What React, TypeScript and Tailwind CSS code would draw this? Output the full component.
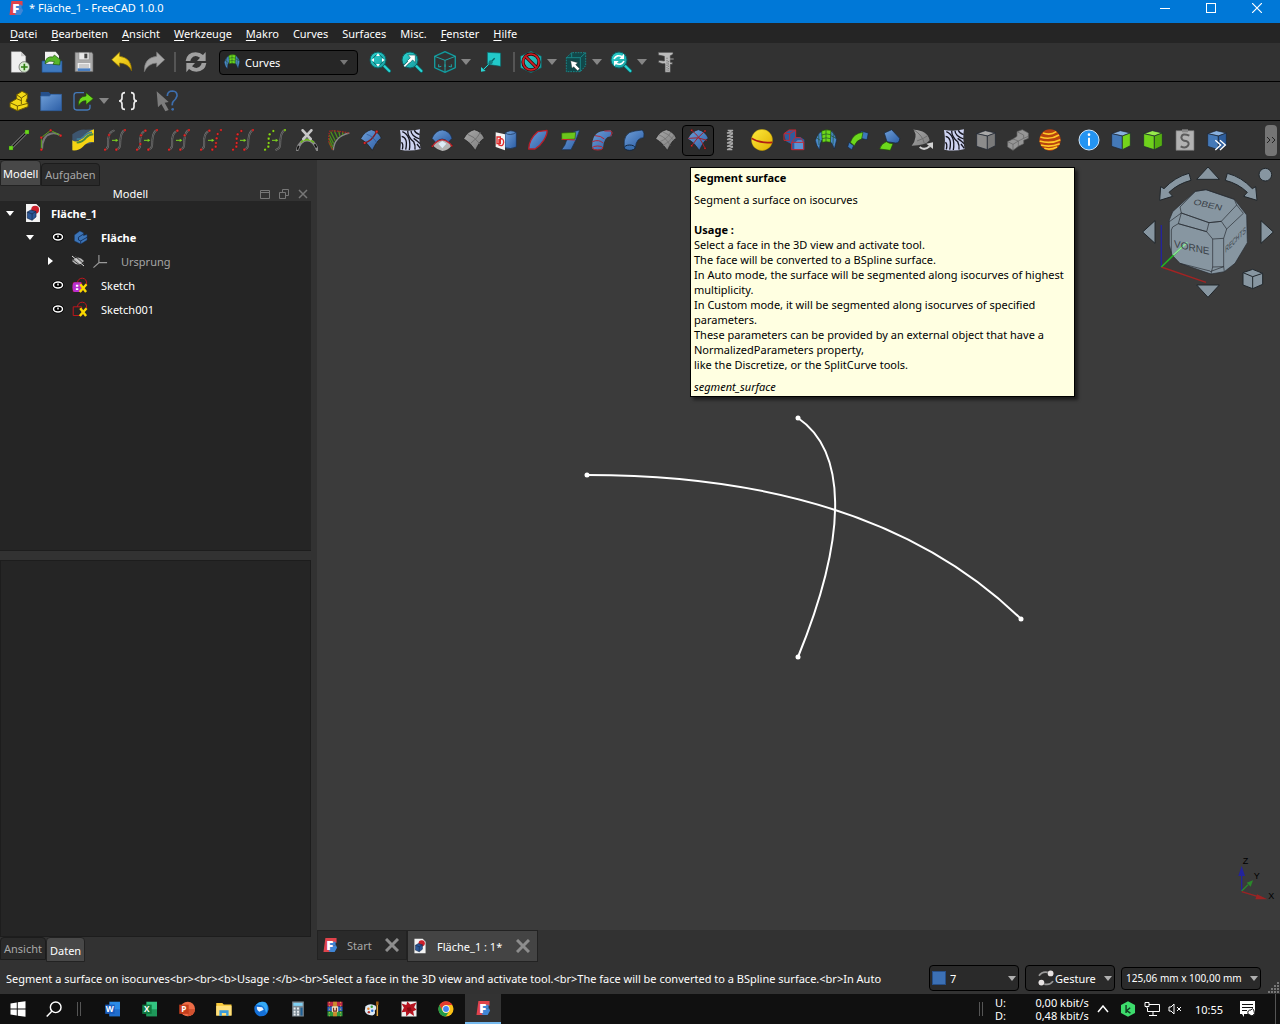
import type { ReactNode } from 'react';

/* ---------- shared drawing helpers ---------- */

function Icon({ children, size = 'size-[22px]' }: { children: ReactNode; size?: string }) {
  return (
    <svg viewBox="0 0 66 66" className={`${size} shrink-0`} fill="none" aria-hidden="true">
      {children}
    </svg>
  );
}

function Gradients() {
  return (
    <svg className="absolute size-0" aria-hidden="true">
      <defs>
        <linearGradient id="blue" x1="0" y1="0" x2="1" y2="1">
          <stop offset="0" stopColor="#6f9fd8" />
          <stop offset="1" stopColor="#2c5ea6" />
        </linearGradient>
        <linearGradient id="gray" x1="0" y1="0" x2="1" y2="1">
          <stop offset="0" stopColor="#a8a8a8" />
          <stop offset="1" stopColor="#7c7c7c" />
        </linearGradient>
        <linearGradient id="yellow" x1="0" y1="0" x2="1" y2="1">
          <stop offset="0" stopColor="#fdea3c" />
          <stop offset="1" stopColor="#e0b000" />
        </linearGradient>
        <linearGradient id="teal" x1="0" y1="0" x2="1" y2="1">
          <stop offset="0" stopColor="#2fd6d2" />
          <stop offset="1" stopColor="#169a9d" />
        </linearGradient>
      </defs>
    </svg>
  );
}

type Pt = [number, number];

function Dots({ pts, color = '#e02c2c', r = 4 }: { pts: Pt[]; color?: string; r?: number }) {
  return (
    <>
      {pts.map(([x, y]) => (
        <circle key={`${x}-${y}`} cx={x} cy={y} r={r} fill={color} stroke="#3a0a0a" strokeWidth="1" />
      ))}
    </>
  );
}

const LEFT: Pt[] = [[3, 62], [13, 53], [14, 42], [14, 29], [17, 16], [28, 6]];
const RIGHT: Pt[] = [[37, 62], [47, 53], [48, 42], [50, 28], [53, 15], [63, 3]];

function CurvePair({ dots, color, left = true, right = true }: { dots: Pt[]; color?: string; left?: boolean; right?: boolean }) {
  return (
    <Icon>
      {left && (
        <g strokeLinecap="round">
          <path d="M3 62C18 58 10 40 13 28Q15 10 29 5" stroke="#777" strokeWidth="6" />
          <path d="M3 62C18 58 10 40 13 28Q15 10 29 5" stroke="#2c2c2c" strokeWidth="2" />
        </g>
      )}
      {right && (
        <g strokeLinecap="round">
          <path d="M37 62C54 58 46 40 50 27Q52 8 63 3" stroke="#777" strokeWidth="6" />
          <path d="M37 62C54 58 46 40 50 27Q52 8 63 3" stroke="#2c2c2c" strokeWidth="2" />
        </g>
      )}
      <path d="M24 34H36" stroke="#7ed321" strokeWidth="3" />
      <path d="M35 29L43 34L35 39Z" fill="#7ed321" />
      <Dots pts={dots} color={color} />
    </Icon>
  );
}

function Magnifier({ children }: { children: ReactNode }) {
  return (
    <Icon>
      <path d="M43 42L61 60" stroke="#0a5f62" strokeWidth="11" strokeLinecap="round" />
      <path d="M43 42L61 60" stroke="#2ad4d2" strokeWidth="7" strokeLinecap="round" />
      <circle cx="27" cy="27" r="24" fill="url(#teal)" stroke="#0a5f62" strokeWidth="3" />
      {children}
    </Icon>
  );
}

function Zebra() {
  return (
    <Icon>
      <path d="M3 3Q33 8 63 1Q58 30 65 60Q34 68 4 62Q8 30 3 3Z" fill="#cdd2f0" />
      <g stroke="#15151f" strokeWidth="4">
        <path d="M8 22Q28 26 20 62" />
        <path d="M10 8Q38 20 31 63" />
        <path d="M26 5Q26 24 44 38Q50 50 48 62" />
        <path d="M36 5Q36 20 62 30" />
        <path d="M46 4Q50 14 62 17" />
        <path d="M44 28Q56 36 63 44" />
        <path d="M54 45L64 58" />
        <path d="M7 40Q14 44 10 61" />
      </g>
    </Icon>
  );
}

function Fan({ fill, children }: { fill: string; children?: ReactNode }) {
  return (
    <Icon>
      <path d="M2 29Q14 7 34 2Q56 8 64 28Q52 32 37 64Q22 40 2 29Z" fill={fill} stroke="#222" strokeWidth="2" />
      {children}
    </Icon>
  );
}

function Box({ left, right, top }: { left: string; right: string; top: string }) {
  return (
    <g stroke="#1c2430" strokeWidth="2" strokeLinejoin="round">
      <path d="M5 14L31 5L61 12L37 21Z" fill={top} />
      <path d="M5 14L37 21V62L5 52Z" fill={left} />
      <path d="M37 21L61 12V50L37 62Z" fill={right} />
    </g>
  );
}

function FreeCadLogo({ size }: { size?: string }) {
  return (
    <Icon size={size}>
      <path d="M14 4H60V24H44V62H6Z" fill="#e0434b" />
      <path d="M34 34H58L62 44L52 62H34Z" fill="#3f86d6" />
      <path d="M30 20H56V34H44V60H28Z" fill="#3f86d6" />
      <text x="18" y="54" fontSize="54" fontWeight="800" fill="#fff" fontFamily="Open Sans, sans-serif">F</text>
    </Icon>
  );
}

function DocIcon({ size }: { size?: string }) {
  return (
    <Icon size={size}>
      <path d="M10 3H44L56 15V63H10Z" fill="#f4f4f4" />
      <circle cx="40" cy="22" r="13" fill="#cc1f2b" />
      <path d="M14 30L26 23L43 28V46L30 57L14 50Z" fill="#2b5797" stroke="#12233f" strokeWidth="2" />
      <path d="M14 30L30 36L43 28M30 36V57" stroke="#12233f" strokeWidth="2" />
    </Icon>
  );
}

function CurvesIcon({ size }: { size?: string }) {
  return (
    <Icon size={size}>
      <path d="M1 34Q8 12 22 6L24 30Q14 38 14 62Q4 52 1 34Z" fill="#4a88c8" stroke="#14273f" strokeWidth="2" />
      <path d="M46 4Q60 12 65 32L58 60Q54 44 44 36Z" fill="#4a88c8" stroke="#14273f" strokeWidth="2" />
      <path d="M20 6Q32 0 48 4L46 40Q34 36 22 40Z" fill="#6cd81c" stroke="#1f4d08" strokeWidth="2" />
      <path d="M33 3V38M20 18Q34 12 47 17M21 29Q34 24 46 29M4 26L16 34M48 20L63 28M11 16L12 48M55 12L54 46" stroke="#1f4d28" strokeWidth="2" />
    </Icon>
  );
}

/* ---------- toolbar pieces ---------- */

function ToolButton({ label, active, children }: { label: string; active?: boolean; children: ReactNode }) {
  return (
    <button
      aria-label={label}
      className={`flex h-[31px] w-8 shrink-0 items-center justify-center rounded-sm ${active ? 'border border-black bg-[#2b2b2b]' : ''}`}
    >
      {children}
    </button>
  );
}

function DropArrow({ label }: { label: string }) {
  return (
    <button aria-label={label} className="flex h-8 w-[13px] shrink-0 items-center">
      <svg viewBox="0 0 10 6" className="h-1.5 w-2.5" aria-hidden="true"><path d="M0 0H10L5 6Z" fill="#868686" /></svg>
    </button>
  );
}

function Caret() {
  return (
    <svg viewBox="0 0 8 5" className="pointer-events-none mr-0.5 h-[5px] w-2 shrink-0" aria-hidden="true">
      <path d="M0 0H8L4 5Z" fill="#b0b0b0" />
    </svg>
  );
}

const fileTools: [string, ReactNode][] = [
  ['Neu', (
    <Icon>
      <path d="M7 2H36L50 16V64H7Z" fill="#efefef" stroke="#bbb" />
      <path d="M36 2V16H50Z" fill="#c9c9c9" />
      <circle cx="46" cy="48" r="16" fill="#d8ecd0" stroke="#555" strokeWidth="2" />
      <path d="M46 38V58M36 48H56" stroke="#2e7d12" strokeWidth="5" />
    </Icon>
  )],
  ['Öffnen', (
    <Icon>
      <path d="M12 2H44L54 14V44H12Z" fill="#f2f2f2" />
      <path d="M3 30H14V40H56V30H63V64H3Z" fill="#3f7ac0" stroke="#1c4d8c" strokeWidth="2" />
      <path d="M12 38Q14 14 36 18L40 12L58 26L56 42L36 40L40 32Q26 26 12 38Z" fill="#57b52a" stroke="#205a0c" strokeWidth="2" />
    </Icon>
  )],
  ['Speichern', (
    <Icon>
      <path d="M6 4H56L60 8V62H6Z" fill="#a9a9a9" stroke="#5e5e5e" strokeWidth="2" />
      <path d="M18 5H48V26H18Z" fill="#e8e8e8" stroke="#777" />
      <path d="M34 8H43V22H34Z" fill="#444" />
      <path d="M14 36H52V60H14Z" fill="#eee" />
      <path d="M18 42H48M18 48H48" stroke="#888" strokeWidth="2" />
      <path d="M14 52H52V60H14Z" fill="#4a7fc1" />
    </Icon>
  )],
];

const viewTools = {
  fitAll: (
    <Magnifier>
      <circle cx="27" cy="27" r="15" stroke="#0a5f62" strokeWidth="3" />
      <path d="M27 7L33 15H21ZM27 47L33 39H21ZM7 27L15 21V33ZM47 27L39 21V33Z" fill="#fff" />
    </Magnifier>
  ),
  fitSelection: (
    <Magnifier>
      <path d="M9 47L28 28" stroke="#0a5f62" strokeWidth="9" />
      <path d="M20 12H43V35L35 27L26 36L19 29L28 20Z" fill="#fff" stroke="#0a5f62" strokeWidth="2" />
      <path d="M10 46L28 28" stroke="#fff" strokeWidth="5" />
    </Magnifier>
  ),
  isometric: (
    <Icon>
      <path d="M33 2L64 16V50L33 64L2 50V16Z" stroke="#0e7276" strokeWidth="5" />
      <path d="M2 16L33 28L64 16M33 28V64" stroke="#1fa5a5" strokeWidth="3" />
      <path d="M33 2L64 16V50L33 64L2 50V16Z" stroke="#22b5b5" strokeWidth="2" />
      <path d="M14 40V48L22 46M44 46L52 48V40M33 40V48" stroke="#1fa5a5" strokeWidth="3" />
    </Icon>
  ),
  align: (
    <Icon>
      <path d="M22 4L62 6V46L22 40Z" fill="#22c9c9" stroke="#0a5f62" strokeWidth="2" />
      <path d="M44 22L10 56" stroke="#0a5f62" strokeWidth="4" />
      <path d="M26 40L12 54" stroke="#2ad4d2" strokeWidth="3" />
      <path d="M3 62V48L17 60Z" fill="#2ad4d2" />
      <circle cx="32" cy="34" r="6" fill="#147d80" />
    </Icon>
  ),
  drawStyle: (
    <Icon>
      <path d="M33 1L64 16V50L33 65L2 50V16Z" fill="url(#teal)" stroke="#0a5f62" strokeWidth="2" />
      <circle cx="33" cy="33" r="24" stroke="#3a0808" strokeWidth="10" />
      <circle cx="33" cy="33" r="24" stroke="#d11f26" strokeWidth="5" />
      <path d="M17 17L49 49" stroke="#3a0808" strokeWidth="10" />
      <path d="M17 17L49 49" stroke="#d11f26" strokeWidth="5" />
    </Icon>
  ),
  boxSelect: (
    <Icon>
      <path d="M4 20L20 5H62V44L46 62H4Z" fill="#11484a" stroke="#1a8587" strokeWidth="3" strokeDasharray="5 3" />
      <path d="M4 20H46V62M46 20L62 5M20 5V20" stroke="#1a8587" strokeWidth="3" />
      <path d="M17 29L38 35L32 41L44 53L38 59L26 47L21 52Z" fill="#fff" stroke="#222" strokeWidth="1" />
    </Icon>
  ),
  sync: (
    <Magnifier>
      <path d="M12 24Q20 8 38 18M42 30Q34 46 16 36" stroke="#fff" strokeWidth="5" />
      <path d="M42 8V24H28ZM12 46V30H26Z" fill="#fff" />
    </Magnifier>
  ),
  measure: (
    <Icon>
      <path d="M10 4H54V10L46 14V22H56V26H46V34H52V40H46V64H30V38H22L10 34L12 28L28 30V16L10 12Z" fill="#bcbcbc" stroke="#444" strokeWidth="2" />
      <path d="M36 20V62M40 30V60" stroke="#555" strokeWidth="2" strokeDasharray="4 3" />
    </Icon>
  ),
};

const pencilRed = '#e02c2c';

const curveTools: [string, ReactNode][] = [
  ['Line', (
    <Icon>
      <path d="M9 57L57 9" stroke="#9a9a9a" strokeWidth="8" />
      <path d="M9 57L57 9" stroke="#111" strokeWidth="4" />
      <path d="M3 51H15V63H3ZM51 3H63V15H51Z" fill="#6cd81c" stroke="#256308" strokeWidth="1" />
    </Icon>
  )],
  ['Gordon profile', (
    <Icon>
      <path d="M6 62Q6 20 32 14Q48 10 62 20" stroke="#777" strokeWidth="6" />
      <path d="M4 63V26L32 4L62 20" stroke="#5fa51c" strokeWidth="3" />
      <Dots pts={[[4, 62], [4, 26], [32, 4], [62, 20]]} />
    </Icon>
  )],
  ['Mixed curve', (
    <Icon>
      <path d="M1 16Q22 0 40 2L66 1L64 40Q44 50 30 40Q16 36 1 52Z" fill="#3d556f" />
      <path d="M66 1V40Q48 36 32 54Q20 66 1 64V34Q14 44 30 28Q44 8 66 1Z" fill="#f6d413" />
      <path d="M14 40Q30 42 42 26Q52 16 64 16" stroke="#4d8a3a" strokeWidth="6" />
      <path d="M14 30Q28 32 38 20Q48 10 60 10" stroke="#3f7f98" strokeWidth="5" />
    </Icon>
  )],
  ['Extend curve', <CurvePair dots={[[3, 62], [15, 18], [37, 62], [63, 3]]} />],
  ['Join curve', <CurvePair dots={[[3, 62], [13, 45], [15, 19], [28, 5], [37, 62], [63, 3]]} />],
  ['Split curve', <CurvePair dots={[[3, 62], [28, 5], [37, 62], [50, 19], [63, 3]]} />],
  ['Discretize', <CurvePair right={false} dots={[[3, 62], [28, 5], ...RIGHT]} />],
  ['Approximate', <CurvePair left={false} dots={[...LEFT, [37, 62], [63, 3]]} />],
  ['Interpolate', <CurvePair left={false} color="#7ee01f" dots={[...LEFT, [63, 3]]} />],
  ['Parametric comb', (
    <Icon>
      <path d="M4 62Q12 34 33 32Q54 34 64 62" stroke="#8a8a8a" strokeWidth="9" strokeLinecap="round" />
      <path d="M4 62Q12 34 33 32Q54 34 64 62" stroke="#111" strokeWidth="5" strokeDasharray="12 60" />
      <path d="M14 40Q22 32 33 32Q44 32 54 40" stroke="#6cb81c" strokeWidth="5" />
      <path d="M20 4L44 30M46 4L22 30" stroke="#c6c6c6" strokeWidth="8" strokeLinecap="round" />
    </Icon>
  )],
  ['Comb plot', (
    <Icon>
      <path d="M16 64Q18 22 64 12" stroke="#8a8a8a" strokeWidth="4" />
      <path d="M14 62L3 40M15 54L3 28M17 44L4 18M22 36L8 8M29 28L18 4M36 22L32 6M44 18L44 9" stroke="#4a8c1c" strokeWidth="4" />
      <path d="M14 62L3 40Q0 20 6 6Q26 4 62 12" stroke="#a3261f" strokeWidth="4" strokeDasharray="5 3" />
    </Icon>
  )],
  ['Curve on surface', (
    <Fan fill="url(#blue)">
      <path d="M14 42Q36 36 50 8" stroke="#7f1d24" strokeWidth="4" />
      <path d="M20 16Q38 20 52 44" stroke="#27508c" strokeWidth="2" />
      <Dots pts={[[50, 8], [14, 42]]} />
    </Fan>
  )],
];

const surfaceTools: [string, ReactNode][] = [
  ['Zebra tool', <Zebra />],
  ['Trim face', (
    <Icon>
      <path d="M3 28Q14 4 34 3Q56 6 63 28L52 40Q34 20 14 40Z" fill="url(#blue)" stroke="#1a2d4b" strokeWidth="2" />
      <path d="M6 50Q32 14 62 50Q50 64 34 66Q18 62 6 50Z" fill="#b4b4b4" />
      <path d="M34 36L46 44L34 58L22 44Z" fill="#dcebf7" />
      <path d="M4 52Q32 14 63 50" stroke="#c42732" strokeWidth="4" />
      <Dots pts={[[4, 52], [62, 50]]} r={3} />
    </Icon>
  )],
  ['Parametrised surface', <Fan fill="url(#gray)"><path d="M14 16Q34 22 50 44M24 42Q46 26 52 10" stroke="#707070" strokeWidth="3" /></Fan>],
  ['Sketch on surface', (
    <Icon>
      <path d="M30 12Q46 0 64 10V54Q46 62 30 56Z" fill="url(#blue)" stroke="#1a2d4b" strokeWidth="2" />
      <path d="M30 12Q46 22 64 10" stroke="#1a2d4b" strokeWidth="2" />
      <path d="M2 10L30 16V64L2 54Z" fill="#f3f3f3" />
      <path d="M6 24H16V44H6ZM12 32Q26 24 26 40Q24 54 12 48Z" stroke={pencilRed} strokeWidth="4" />
    </Icon>
  )],
  ['Pipeshell profile', (
    <Icon>
      <path d="M5 60Q6 30 32 8L60 4Q62 14 50 34Q40 50 24 60Z" fill="url(#blue)" stroke="#b81f2a" strokeWidth="4" strokeLinejoin="round" />
    </Icon>
  )],
  ['Blend surface', (
    <Icon>
      <path d="M44 8L62 3Q54 30 36 62H8Q20 48 22 36Z" fill="url(#blue)" stroke="#1a2d4b" strokeWidth="2" />
      <path d="M8 12L50 10L48 30L8 32Z" fill="#6cc51c" stroke="#2a5d0a" strokeWidth="2" />
      <path d="M8 31L48 33" stroke="#d02029" strokeWidth="3" />
    </Icon>
  )],
  ['Pipe shell', (
    <Icon>
      <path d="M4 58Q0 10 38 6L60 4L62 22Q38 20 36 58Q20 66 4 58Z" fill="url(#blue)" />
      <g stroke="#b52534" strokeWidth="3">
        <ellipse cx="20" cy="57" rx="16" ry="6" />
        <path d="M4 38Q24 30 36 42M12 20Q30 20 40 30M40 6H60L64 12L58 22" />
      </g>
    </Icon>
  )],
  ['Sweep 2 rails', (
    <Icon>
      <path d="M4 56Q-2 10 36 6L58 3Q66 10 62 26Q40 26 37 56Z" fill="url(#blue)" stroke="#14273f" strokeWidth="2" />
      <ellipse cx="20" cy="56" rx="16" ry="8" fill="#3a6fb0" stroke="#14273f" strokeWidth="3" />
    </Icon>
  )],
  ['Isocurve', <Fan fill="url(#gray)"><path d="M12 18Q32 24 46 50M22 8Q42 14 56 34M14 38Q38 30 48 8M24 50Q48 36 58 18" stroke="#6c6c6c" strokeWidth="2" /></Fan>],
];

const meshTools: [string, ReactNode][] = [
  ['Compression spring', (
    <Icon>
      <g stroke="#a9a9a9" strokeWidth="4">
        <path d="M26 4H42L24 12H42M24 22L42 14M24 22H42M24 32L42 24M24 32H42M24 42L42 34M24 42H42M24 52L42 44M24 52H42M24 62L42 54M24 62H40" />
      </g>
    </Icon>
  )],
  ['Reflect lines', (
    <Icon>
      <circle cx="33" cy="33" r="32" fill="url(#yellow)" stroke="#7d6400" strokeWidth="1" />
      <path d="M2 28Q26 44 64 40" stroke="#b01d14" strokeWidth="5" />
    </Icon>
  )],
  ['Multi loft', (
    <Icon>
      <path d="M3 14L18 3H38V24H52L64 32V62H26V46L8 36Z" fill="#2f5d9e" />
      <path d="M34 42L44 34H60L62 60H34Z" fill="#5c93d4" />
      <g stroke="#c42732" strokeWidth="3">
        <path d="M3 14H20V34H3ZM26 40H62V62H26ZM3 14L18 3H38L20 14M38 3V24M26 40L36 26H52L62 40" />
      </g>
    </Icon>
  )],
  ['Blend solid', <CurvesIcon />],
  ['Profile support', (
    <Icon>
      <path d="M6 40L20 50L14 62L2 54Z" fill="#3e78bb" stroke="#14273f" strokeWidth="2" />
      <path d="M42 6L64 12L60 32L40 28Z" fill="#3e78bb" stroke="#14273f" strokeWidth="2" />
      <path d="M10 40Q20 12 48 10L44 30Q30 32 22 50Z" fill="#6cd81c" stroke="#1f4d08" strokeWidth="2" />
    </Icon>
  )],
  ['Flatten face', (
    <Icon>
      <path d="M16 12L38 2L62 28Q62 42 50 42L24 38Z" fill="url(#blue)" stroke="#14273f" strokeWidth="2" />
      <path d="M2 60Q6 44 22 38Q30 44 42 44L34 64Z" fill="#6cd81c" stroke="#1f4d08" strokeWidth="2" />
    </Icon>
  )],
  ['Rotation sweep', (
    <Icon>
      <path d="M8 2Q50 4 56 34Q44 50 2 50Q22 24 8 2Z" fill="url(#gray)" />
      <path d="M8 2Q36 20 40 44M18 36Q40 28 50 20" stroke="#6e6e6e" strokeWidth="3" />
      <path d="M26 54Q40 66 56 52" stroke="#d2d2d2" strokeWidth="6" />
      <path d="M46 44L66 40V60Z" fill="#d2d2d2" />
    </Icon>
  )],
  ['Zebra surface', <Zebra />],
  ['Solid', <Icon><Box left="#8c8c8c" right="#7a7a7a" top="#a8a8a8" /></Icon>],
  ['Paste SVG', (
    <Icon>
      <g fill="#969696" stroke="#606060" strokeWidth="2">
        <path d="M30 8L46 2L64 12V28L50 34V44L34 52L18 64L2 54V38L18 30L30 22Z" />
        <path d="M2 38L18 46L34 36L50 28L64 22M18 46V64M34 36V52M18 30L34 36M30 8L50 18V28" />
      </g>
    </Icon>
  )],
  ['Adjacent faces', (
    <Icon>
      <circle cx="33" cy="33" r="32" fill="#b8430f" />
      <g stroke="#ffc928" strokeWidth="5">
        <path d="M12 12Q34 20 52 8M4 24Q34 34 60 18M2 36Q34 46 64 32M6 48Q34 56 62 44M16 58Q34 64 54 54" />
      </g>
    </Icon>
  )],
];

const infoTools: [string, ReactNode][] = [
  ['Geometry info', (
    <Icon>
      <circle cx="33" cy="33" r="30" fill="#2494f2" stroke="#cfe6fb" strokeWidth="3" />
      <circle cx="33" cy="17" r="4" fill="#fff" />
      <path d="M33 26V50" stroke="#fff" strokeWidth="6" />
    </Icon>
  )],
  ['Extract shapes', <Icon><Box left="#4479b8" right="#74d41c" top="#88b0de" /></Icon>],
  ['Parametric solid', <Icon><Box left="#6fd21c" right="#55b010" top="#97ea4c" /></Icon>],
  ['Paste', (
    <Icon>
      <path d="M6 5H60V64H6Z" fill="#b2b2b2" stroke="#6e6e6e" strokeWidth="2" />
      <path d="M24 1H42V10H24Z" fill="#888" />
      <path d="M46 20Q24 10 22 26Q24 36 36 36Q48 40 42 50Q34 60 20 52" stroke="#5c5c5c" strokeWidth="6" />
    </Icon>
  )],
  ['Object to console', (
    <Icon>
      <Box left="#4479b8" right="#2d5d9c" top="#88b0de" />
      <path d="M28 34L44 48L28 63M42 34L58 48L42 63" stroke="#fff" strokeWidth="4" />
    </Icon>
  )],
];

/* ---------- top of the window ---------- */

function TitleBar() {
  return (
    <header className="flex h-[23px] items-start bg-[#0078d7] pl-2 text-white">
      <FreeCadLogo size="size-4" />
      <h1 className="ml-[5px] flex-1 leading-4">* Fläche_1 - FreeCAD 1.0.0</h1>
      <button aria-label="Minimieren" className="flex h-4 w-[46px] items-center justify-center">
        <span className="h-px w-2.5 bg-white" />
      </button>
      <button aria-label="Maximieren" className="flex h-4 w-[46px] items-center justify-center">
        <span className="size-2.5 border border-white" />
      </button>
      <button aria-label="Schließen" className="flex h-4 w-[46px] items-center justify-center">
        <svg viewBox="0 0 10 10" className="size-2.5"><path d="M0 0L10 10M10 0L0 10" stroke="#fff" strokeWidth="1.2" /></svg>
      </button>
    </header>
  );
}

const menus = [
  ['D', 'atei'], ['B', 'earbeiten'], ['A', 'nsicht'], ['W', 'erkzeuge'], ['M', 'akro'],
  ['', 'Curves'], ['', 'Surfaces'], ['', 'Misc.'], ['F', 'enster'], ['H', 'ilfe'],
];

function MenuBar() {
  return (
    <nav className="flex h-5 items-center bg-[#252525] pl-[3px] text-white">
      {menus.map(([key, rest]) => (
        <button key={rest} className="px-[7px] pt-px leading-[19px]">
          <u className="underline-offset-2">{key}</u>{rest}
        </button>
      ))}
    </nav>
  );
}

function ToolGroup({ tools }: { tools: [string, ReactNode][] }) {
  return (
    <>
      {tools.map(([label, icon]) => (
        <ToolButton key={label} label={label}>{icon}</ToolButton>
      ))}
    </>
  );
}

function SegmentTooltip() {
  return (
    <div role="tooltip" className="absolute top-full left-2 z-10 mt-[11px] w-[385px] border border-black bg-[#ffffe1] px-[3px] pt-[2px] pb-[2px] whitespace-nowrap text-black shadow-[3px_3px_3px_rgba(0,0,0,0.5)]">
      <p className="font-bold">Segment surface</p>
      <p className="mt-[7px]">Segment a surface on isocurves</p>
      <p className="mt-[15px] font-bold">Usage :</p>
      <p>
        Select a face in the 3D view and activate tool.<br />
        The face will be converted to a BSpline surface.<br />
        In Auto mode, the surface will be segmented along isocurves of highest<br />
        multiplicity.<br />
        In Custom mode, it will be segmented along isocurves of specified<br />
        parameters.<br />
        These parameters can be provided by an external object that have a<br />
        NormalizedParameters property,<br />
        like the Discretize, or the SplitCurve tools.
      </p>
      <p className="mt-[7px] italic">segment_surface</p>
    </div>
  );
}

function Toolbars() {
  const sep = 'h-5 w-0.5 shrink-0 bg-[#555]';
  return (
    <>
      <div className="flex h-[39px] items-center border-b border-black pl-1">
        <ToolGroup tools={fileTools} />
        <div className="ml-1.5 flex">
          <ToolButton label="Rückgängig">
            <Icon>
              <path d="M2 26L26 3V16Q62 20 62 60Q52 38 26 36V48Z" fill="url(#yellow)" stroke="#7d6400" strokeWidth="2" />
            </Icon>
          </ToolButton>
          <ToolButton label="Wiederholen">
            <Icon>
              <path d="M65 26L41 3V16Q2 20 4 62Q14 38 41 36V48Z" fill="#a6a6a6" stroke="#777" strokeWidth="2" />
            </Icon>
          </ToolButton>
        </div>
        <span className={`mx-1 ${sep}`} />
        <ToolButton label="Aktualisieren">
          <Icon>
            <g fill="#a0a0a0">
              <path d="M2 30Q6 4 32 4Q46 4 54 12L62 3V30H36L45 20Q28 8 18 24L16 30Z" />
              <path d="M64 36Q60 62 34 62Q20 62 12 54L4 64V36H30L21 46Q38 58 48 42L50 36Z" />
            </g>
          </Icon>
        </ToolButton>
        <div className="ml-[7px] flex h-[25px] w-[139px] items-center rounded-sm border border-black bg-[#262626] pl-1 text-white">
          <CurvesIcon size="size-4" />
          <select aria-label="Arbeitsbereich" className="ml-[5px] min-w-0 flex-1 appearance-none bg-transparent outline-none">
            <option>Curves</option>
          </select>
          <svg viewBox="0 0 8 5" className="pointer-events-none mr-[9px] h-[5px] w-2"><path d="M0 0H8L4 5Z" fill="#777" /></svg>
        </div>
        <div className="ml-1.5 flex items-center">
          <ToolButton label="Alles einpassen">{viewTools.fitAll}</ToolButton>
          <ToolButton label="Auswahl einpassen">{viewTools.fitSelection}</ToolButton>
          <span className="w-px" />
          <ToolButton label="Isometrisch">{viewTools.isometric}</ToolButton>
          <DropArrow label="Ansichten" />
          <span className="w-px" />
          <ToolButton label="An Auswahl ausrichten">{viewTools.align}</ToolButton>
          <span className={`ml-[6px] ${sep}`} />
          <ToolButton label="Darstellung">{viewTools.drawStyle}</ToolButton>
          <DropArrow label="Darstellungsarten" />
          <ToolButton label="Rahmenauswahl">{viewTools.boxSelect}</ToolButton>
          <DropArrow label="Auswahlarten" />
          <ToolButton label="Ansicht synchronisieren">{viewTools.sync}</ToolButton>
          <DropArrow label="Synchronisieren" />
          <ToolButton label="Messen">{viewTools.measure}</ToolButton>
        </div>
      </div>

      <div className="flex h-[39px] items-center border-b border-black pl-[3px]">
        <ToolButton label="Part">
          <Icon>
            <path d="M6 38L26 26V14L42 4L58 12V24L54 34L60 40V50L28 62L6 52Z" fill="#f3d916" stroke="#6f5c00" strokeWidth="3" />
            <path d="M6 38L28 48L60 40M28 48V62M26 14L40 24L58 12M40 24V42M26 26L40 32" stroke="#6f5c00" strokeWidth="3" />
          </Icon>
        </ToolButton>
        <ToolButton label="Gruppe">
          <Icon>
            <path d="M2 6H26L32 12H56V22H2Z" fill="#25508c" />
            <path d="M2 18H28L34 13H65V62H2Z" fill="url(#blue)" stroke="#2d5d9c" strokeWidth="2" />
          </Icon>
        </ToolButton>
        <ToolButton label="Link erstellen">
          <Icon>
            <path d="M36 8H14Q6 8 6 16V52Q6 60 14 60H46Q54 60 54 52V44" stroke="#4479b8" strokeWidth="4" />
            <path d="M20 48Q16 20 42 18V8L64 26L42 44V32Q26 32 20 48Z" fill="#6cd81c" stroke="#1f4d08" strokeWidth="2" />
          </Icon>
        </ToolButton>
        <DropArrow label="Link-Optionen" />
        <ToolButton label="Variablensatz">
          <Icon>
            <g stroke="#eee" strokeWidth="5">
              <path d="M24 8Q15 8 15 16V24Q15 33 6 33Q15 33 15 42V50Q15 58 24 58M42 8Q51 8 51 16V24Q51 33 60 33Q51 33 51 42V50Q51 58 42 58" />
            </g>
          </Icon>
        </ToolButton>
        <div className="ml-[7px]">
          <ToolButton label="Direkthilfe">
            <Icon>
              <path d="M2 4L38 36L26 38L38 60L28 64L16 42L6 52Z" fill="#7d7d7d" />
              <path d="M34 18Q34 3 50 3Q64 4 63 18Q60 28 52 34Q48 38 49 46" stroke="#3e6fae" strokeWidth="5" />
              <circle cx="50" cy="58" r="4" fill="#3e6fae" />
            </Icon>
          </ToolButton>
        </div>
      </div>

      <div className="flex h-[39px] items-center border-b border-black pl-[3px]">
        <ToolGroup tools={curveTools} />
        <div className="ml-[7px] flex">
          <ToolGroup tools={surfaceTools} />
          <div className="relative">
            <ToolButton label="Segment surface" active>
              <Fan fill="url(#blue)">
                <path d="M14 4Q40 24 54 58M54 6Q30 26 14 50M4 28Q34 22 60 34" stroke="#a3202c" strokeWidth="3" />
                <Dots pts={[[14, 4], [54, 6], [14, 50], [54, 58]]} r={3} />
              </Fan>
            </ToolButton>
            <SegmentTooltip />
          </div>
          <ToolGroup tools={meshTools} />
        </div>
        <div className="ml-[7px] flex">
          <ToolGroup tools={infoTools} />
        </div>
        <button aria-label="Mehr" className="mr-[3px] ml-auto flex h-[31px] w-3 items-center justify-center rounded-sm bg-[#757575] text-[#222]">
          <svg viewBox="0 0 10 8" className="h-2 w-2.5"><path d="M1 1L4 4L1 7M6 1L9 4L6 7" stroke="currentColor" fill="none" /></svg>
        </button>
      </div>
    </>
  );
}

/* ---------- model tree ---------- */

function Expander({ open }: { open: boolean }) {
  return (
    <svg viewBox="0 0 10 10" className="size-2.5 shrink-0" aria-hidden="true">
      <path d={open ? 'M1 3H9L5 8Z' : 'M3 1L8 5L3 9Z'} fill="#fff" />
    </svg>
  );
}

function Eye({ hidden }: { hidden?: boolean }) {
  if (hidden) {
    return (
      <svg viewBox="0 0 14 12" className="h-3 w-3.5 shrink-0" fill="none">
        <path d="M1 6Q7 -1 13 6Q7 13 1 6Z" fill="#b5b5b5" />
        <path d="M4 1L13 9M1 4L10 11" stroke="#444" />
        <path d="M1 1L13 11" stroke="#ddd" />
      </svg>
    );
  }
  return (
    <svg viewBox="0 0 14 12" className="h-3 w-3.5 shrink-0" fill="none">
      <ellipse cx="7" cy="6" rx="6" ry="4.500" fill="#000" />
      <ellipse cx="7" cy="6" rx="4.500" ry="3" stroke="#fff" strokeWidth="1.500" />
      <path d="M7 4.500V6.500" stroke="#fff" strokeWidth="1.500" />
    </svg>
  );
}

function SketchIcon({ attached }: { attached?: boolean }) {
  return (
    <Icon size="size-4">
      <path d="M22 24Q26 4 44 5Q62 8 60 30" stroke="#c4161c" strokeWidth="4" />
      <path d="M5 24H40V60H5Z" stroke="#c4161c" strokeWidth="4" />
      {attached && (
        <>
          <path d="M12 22H38V62H12Q2 62 2 42Q2 22 12 22Z" fill="#b92fd0" />
          <path d="M16 32H26V40H16ZM16 46H26V54H16Z" fill="#fff" />
        </>
      )}
      <path d="M34 30L58 62M60 30L32 62" stroke="#f8d800" strokeWidth="10" />
    </Icon>
  );
}

function TreePanel() {
  const row = 'flex h-6 items-center';
  return (
    <ul className="h-[350px] border-b border-[#1d1d1d] bg-[#252525] text-white">
      <li className={`${row} pl-[5px] font-bold`}>
        <Expander open />
        <span className="mx-2 flex"><DocIcon size="size-5" /></span>
        Fläche_1
      </li>
      <li className={`${row} pl-[25px] font-bold`}>
        <Expander open />
        <span className="ml-4"><Eye /></span>
        <span className="mr-[13px] ml-2 flex">
          <Icon size="size-[15px]">
            <path d="M6 22L30 4L46 12V24L62 20V44L34 62L6 48Z" fill="#3c75b8" stroke="#14305a" strokeWidth="2" />
            <path d="M24 32V44L34 48L62 32M34 48V62M24 32L46 18" stroke="#14305a" strokeWidth="4" />
          </Icon>
        </span>
        Fläche
      </li>
      <li className={`${row} pl-[45px] text-[#a6a6a6]`}>
        <Expander open={false} />
        <span className="ml-4"><Eye hidden /></span>
        <span className="mr-[13px] ml-2 flex">
          <Icon size="size-[15px]">
            <path d="M26 4V38L2 60M26 38H62" stroke="#9a9a9a" strokeWidth="5" />
          </Icon>
        </span>
        Ursprung
      </li>
      <li className={`${row} pl-[51px]`}>
        <Eye />
        <span className="mr-[13px] ml-[7px] flex"><SketchIcon attached /></span>
        Sketch
      </li>
      <li className={`${row} pl-[51px]`}>
        <Eye />
        <span className="mr-[13px] ml-[7px] flex"><SketchIcon /></span>
        Sketch001
      </li>
    </ul>
  );
}

function SidePanel() {
  const active = 'rounded-t-sm border border-[#222] bg-[#484848] text-white';
  const idle = 'rounded-t-sm border border-[#1c1c1c] bg-[#2a2a2a] text-[#a8a8a8]';
  return (
    <aside className="flex w-[311px] shrink-0 flex-col">
      <div className="flex h-[26px] items-end">
        <button className={`h-[26px] px-[2px] ${active}`}>Modell</button>
        <button className={`h-[23px] px-[3px] ${idle}`}>Aufgaben</button>
      </div>
      <div className="flex h-[15px] items-center pr-px pl-px text-white">
        <h2 className="flex-1 text-center leading-[15px]">Modell</h2>
        <div className="flex w-[50px] gap-[9px]">
          <svg viewBox="0 0 10 10" className="size-2.5" fill="none" stroke="#777"><path d="M.5 1.500H9.500V9.500H.5ZM.5 3.500H9.500" /></svg>
          <svg viewBox="0 0 10 10" className="size-2.5" fill="none" stroke="#777"><path d="M.5 3.500H6.500V9.500H.5ZM3.500 3.500V.5H9.500V6.500H6.500" /></svg>
          <svg viewBox="0 0 10 10" className="size-2.5" fill="none" stroke="#777"><path d="M1 1L9 9M9 1L1 9" strokeWidth="1.500" /></svg>
        </div>
      </div>
      <TreePanel />
      <div className="mt-[9px] flex-1 border border-[#1d1d1d] bg-[#252525]" />
      <div className="flex h-[25px] items-start">
        <button className={`h-[23px] px-[3px] ${idle}`}>Ansicht</button>
        <button className={`h-[25px] px-[3px] pt-[2px] ${active}`}>Daten</button>
      </div>
    </aside>
  );
}

/* ---------- 3D view ---------- */

function NavigationCube() {
  return (
    <svg viewBox="0 15 480 450" className="absolute top-0 right-0 h-[150px] w-40" fill="none" aria-label="Navigationswürfel">
      <g fill="#8796a1" stroke="#20262b" strokeWidth="3" strokeLinejoin="round">
        <path d="M264 36L298 73H230Z" />
        <path d="M264 427L230 390H298Z" />
        <path d="M68 231L105 197V265Z" />
        <path d="M460 231L423 197V265Z" />
        <circle cx="436" cy="59" r="19" />
        <path d="M207 55L213 76Q174 86 147 112L158 124L119 136L122 95L132 101Q165 66 207 55Z" />
        <path d="M322 55L316 76Q355 86 382 112L371 124L411 136L407 95L397 101Q365 66 322 55Z" />
        <path d="M398 343L428 355V388L398 401L369 390V353Z" />
        <path d="M369 353L398 365L428 355M398 365V401" />
      </g>
      <path d="M124 210V336" stroke="#23239c" strokeWidth="4" />
      <path d="M124 336L258 382" stroke="#a32323" strokeWidth="4" />
      <g stroke="#252b30" strokeWidth="2" strokeLinejoin="round">
        <path d="M226 109L258 104L343 133L380 180L382 263L345 325L313 350L273 357L180 325L156 300L148 270V195L158 170L180 150Z" fill="#8796a1" />
        <path d="M226 109L258 104L343 133L350 150L304 199L267 203L184 174L180 156Z" />
        <path d="M184 174L267 203L260 230L175 206Z" />
        <path d="M175 206L260 230L278 252V336L273 357M175 206L158 216L154 225V295" />
        <path d="M267 203L304 199L320 222L311 250L278 252M311 250V335L270 350" />
        <path d="M350 150L370 175L320 222M148 200L184 174M311 335L313 350M278 336L311 335M180 325L270 348" />
      </g>
      <path d="M124 336L190 272" stroke="#24b324" strokeWidth="5" />
      <path d="M160 300L202 262" stroke="#8fe09c" strokeWidth="5" />
      <g fill="#3a4249" fontFamily="Liberation Sans, sans-serif" fontSize="30">
        <text transform="matrix(1 .22 -.3 .75 218 148)">OBEN</text>
        <text transform="matrix(1 .22 0 1 162 276)">VORNE</text>
        <text transform="matrix(.5 -.5 0 .9 316 294)">RECHTS</text>
      </g>
    </svg>
  );
}

function AxisCross() {
  return (
    <svg viewBox="1230 30 150 165" className="absolute right-0 bottom-[25px] h-[55px] w-[50px]" fill="none" aria-hidden="true">
      <path d="M1265 153V104" stroke="#23239c" strokeWidth="4" />
      <path d="M1265 78L1275 108H1255Z" fill="#23239c" />
      <path d="M1265 153L1284 134" stroke="#2a8a2a" strokeWidth="4" />
      <path d="M1299 121L1292 140L1280 128Z" fill="#2a8a2a" />
      <path d="M1265 155L1312 169" stroke="#9c2323" strokeWidth="4" />
      <path d="M1342 178L1306 178L1311 163Z" fill="#9c2323" />
      <g fill="#000" fontFamily="Liberation Sans, sans-serif" fontSize="27">
        <text x="1268" y="71">Z</text>
        <text x="1301" y="118">Y</text>
        <text x="1345" y="176">X</text>
      </g>
    </svg>
  );
}

function Viewport() {
  return (
    <section aria-label="3D-Ansicht" className="relative flex-1 bg-[#3b3b3b]">
      <svg viewBox="0 0 963 770" preserveAspectRatio="xMidYMid slice" className="absolute inset-0 size-full" fill="none">
        <path d="M270 315Q556 315 704 459" stroke="#fff" strokeWidth="2" />
        <path d="M481 258C528 290 533 370 481 497" stroke="#fff" strokeWidth="2" />
        <g fill="#fff">
          <circle cx="270" cy="315" r="2.500" />
          <circle cx="704" cy="459" r="2.500" />
          <circle cx="481" cy="258" r="2.500" />
          <circle cx="481" cy="497" r="2.500" />
        </g>
      </svg>
      <NavigationCube />
      <AxisCross />
    </section>
  );
}

function CloseX() {
  return <svg viewBox="0 0 14 14" className="size-3.5"><path d="M1 1L13 13M13 1L1 13" stroke="#8d8d8d" strokeWidth="3" /></svg>;
}

function DocumentTabs() {
  return (
    <div className="flex h-8 items-start">
      <div className="flex h-[30px] w-[90px] items-center border border-[#222] bg-[#2a2a2a] pl-1 text-[#a8a8a8]">
        <FreeCadLogo size="size-4" />
        <button className="ml-[9px] flex-1 text-left">Start</button>
        <button aria-label="Start schließen" className="mr-[7px]"><CloseX /></button>
      </div>
      <div className="flex h-8 w-[131px] items-center border border-[#222] bg-[#444] pl-1 text-white">
        <DocIcon size="size-4" />
        <button className="ml-[9px] flex-1 text-left whitespace-nowrap">Fläche_1 : 1*</button>
        <button aria-label="Fläche_1 schließen" className="mr-[7px]"><CloseX /></button>
      </div>
    </div>
  );
}

/* ---------- status bar ---------- */

const hint =
  'Segment a surface on isocurves<br><br><b>Usage :</b><br>Select a face in the 3D view and activate tool.<br>The face will be converted to a BSpline surface.<br>In Auto';

function StatusBar() {
  const box = 'flex shrink-0 items-center rounded-sm border border-black bg-[#2a2a2a] text-white';
  return (
    <footer className="flex h-8 items-center pl-1.5 text-white">
      <p className="min-w-0 flex-1 overflow-hidden whitespace-nowrap">{hint}</p>
      <div className={`ml-3 h-[26px] w-[90px] ${box}`}>
        <span className="ml-0.5 size-3.5 border border-[#274f87] bg-[#3c70b4]" />
        <select aria-label="Benachrichtigungen" className="ml-1 min-w-0 flex-1 appearance-none bg-transparent outline-none"><option>7</option></select>
        <Caret />
      </div>
      <div className={`ml-1.5 h-[26px] w-[90px] ${box}`}>
        <span className="ml-3 flex">
          <Icon size="size-4">
            <path d="M4 24Q18 4 40 10M62 46Q50 64 26 58" stroke="#999" strokeWidth="7" />
            <circle cx="52" cy="14" r="12" fill="#e6e2e2" />
            <circle cx="14" cy="52" r="12" fill="#e6e2e2" />
          </Icon>
        </span>
        <select aria-label="Navigationsstil" className="min-w-0 flex-1 appearance-none bg-transparent pl-px outline-none"><option>Gesture</option></select>
        <Caret />
      </div>
      <div className={`ml-1.5 h-[23px] w-[140px] text-[10px] ${box}`}>
        <select aria-label="Abmessungen" className="min-w-0 flex-1 appearance-none bg-transparent pl-1 outline-none"><option>125,06 mm x 100,00 mm</option></select>
        <Caret />
      </div>
      <svg viewBox="0 0 12 12" className="ml-[7px] size-3 self-end" fill="#777">
        <path d="M9 0h2v2h-2zM6 3h2v2h-2zM9 3h2v2h-2zM3 6h2v2h-2zM6 6h2v2h-2zM9 6h2v2h-2zM0 9h2v2h-2zM3 9h2v2h-2zM6 9h2v2h-2zM9 9h2v2h-2z" />
      </svg>
    </footer>
  );
}

/* ---------- windows taskbar ---------- */

function OfficeIcon({ letter, dark, light }: { letter: string; dark: string; light: string }) {
  return (
    <Icon size="size-4">
      <path d="M18 3H62V63H18Z" fill={light} />
      <path d="M18 34H62V63H18Z" fill={dark} opacity=".6" />
      <path d="M1 15H40V53H1Z" fill={dark} />
      <text x="20" y="46" textAnchor="middle" fontSize="34" fontWeight="700" fill="#fff" fontFamily="Open Sans, sans-serif">{letter}</text>
    </Icon>
  );
}

const apps: [string, ReactNode][] = [
  ['Word', <OfficeIcon letter="W" dark="#1a5dbe" light="#2b8be6" />],
  ['Excel', <OfficeIcon letter="X" dark="#107c41" light="#33c481" />],
  ['PowerPoint', (
    <Icon size="size-4">
      <circle cx="36" cy="33" r="30" fill="#ed6c47" />
      <path d="M36 33H66A30 30 0 0 1 36 63Z" fill="#d35230" />
      <path d="M1 15H40V53H1Z" fill="#c43e1c" />
      <text x="20" y="46" textAnchor="middle" fontSize="34" fontWeight="700" fill="#fff" fontFamily="Open Sans, sans-serif">P</text>
    </Icon>
  )],
  ['Explorer', (
    <Icon size="size-4">
      <path d="M1 8H26L32 14H64V60H1Z" fill="#f8c83a" />
      <path d="M1 20H64V60H1Z" fill="#ffe07c" />
      <path d="M14 62V38H52V62H42V50H24V62Z" fill="#3a9bdc" />
    </Icon>
  )],
  ['Thunderbird', (
    <Icon size="size-4">
      <path d="M6 24Q2 52 26 63Q58 66 64 36Q66 16 50 4Q20 0 6 24Z" fill="#1470d8" />
      <path d="M12 16Q30 -4 54 8Q66 30 54 50Q48 10 12 16Z" fill="#35a9f5" />
      <path d="M16 24L38 26L44 36L26 44Q14 38 16 24Z" fill="#e9f3fd" />
    </Icon>
  )],
  ['Rechner', (
    <Icon size="size-4">
      <path d="M9 2H57V64H9Z" fill="#7d8a94" />
      <path d="M14 8H52V20H14Z" fill="#7fd0f3" />
      <path d="M15 27h8v8h-8zM29 27h8v8h-8zM15 40h8v8h-8zM29 40h8v8h-8zM15 52h8v8h-8zM29 52h8v8h-8z" fill="#e9eef2" />
      <path d="M43 27h9v33h-9z" fill="#1f5f94" />
    </Icon>
  )],
  ['WinRAR', (
    <Icon size="size-4">
      <path d="M2 3H64V22H2Z" fill="#c02846" />
      <path d="M2 23H64V42H2Z" fill="#2d62c4" />
      <path d="M2 43H64V63H2Z" fill="#2f9a3e" />
      <path d="M25 3H41V63H25Z" fill="#c98a2c" />
      <path d="M20 22H46V46H20Z" fill="#efe3c0" />
      <path d="M27 28V42H39V28" stroke="#7c2a1a" strokeWidth="5" />
      <path d="M10 3V63M56 3V63" stroke="#e8c04a" strokeWidth="3" strokeDasharray="6 8" />
    </Icon>
  )],
  ['Paint', (
    <Icon size="size-4">
      <path d="M6 22Q26 6 48 20Q54 34 44 40Q50 54 34 60Q8 58 3 40Z" fill="#dbe9f5" />
      <circle cx="18" cy="32" r="5" fill="#e8842a" />
      <circle cx="32" cy="24" r="5" fill="#3aa33a" />
      <circle cx="20" cy="46" r="5" fill="#b5352c" />
      <circle cx="34" cy="40" r="5" fill="#2a6fd0" />
      <path d="M52 4H58V62H52Z" fill="#e0a23a" />
      <path d="M50 2H60V16H50Z" fill="#a35c14" />
    </Icon>
  )],
  ['IrfanView', (
    <Icon size="size-4">
      <path d="M2 2H64V64H2Z" fill="#efefef" />
      <path d="M2 10L22 16L26 2L38 14L64 6L54 26L64 36L50 42L54 62L36 50L22 64L20 44L2 46L12 28Z" fill="#b51420" />
      <path d="M24 28L40 26L44 40L28 44Z" fill="#8a0c14" />
    </Icon>
  )],
  ['Chrome', (
    <Icon size="size-4">
      <circle cx="33" cy="33" r="31" fill="#fbc116" />
      <path d="M6 17A31 31 0 0 1 60 17H33A16 16 0 0 0 19 41Z" fill="#e33b2e" />
      <path d="M6 17A31 31 0 0 0 32 64L47 41A16 16 0 0 1 19 41Z" fill="#229a48" />
      <circle cx="33" cy="33" r="15" fill="#fff" />
      <circle cx="33" cy="33" r="12" fill="#4285f4" />
    </Icon>
  )],
];

function Taskbar() {
  const cell = 'flex h-full w-[37px] shrink-0 items-center justify-center';
  return (
    <nav aria-label="Taskleiste" className="flex h-[30px] items-center bg-[#101010] text-white">
      <button aria-label="Start" className="flex h-full w-[35px] shrink-0 items-center justify-center">
        <Icon size="size-4">
          <path d="M2 10L28 6V31H2ZM32 5L64 1V31H32ZM2 35H28V60L2 56ZM32 35H64V65L32 61Z" fill="#fff" />
        </Icon>
      </button>
      <button aria-label="Suche" className={cell}>
        <Icon size="size-4">
          <circle cx="40" cy="26" r="22" stroke="#fff" strokeWidth="6" />
          <path d="M24 42L3 64" stroke="#fff" strokeWidth="6" />
        </Icon>
      </button>
      <span className="mr-[13px] ml-[5px] h-3.5 w-1 border-x border-[#555]" />
      {apps.map(([label, icon]) => (
        <button key={label} aria-label={label} className={cell}>{icon}</button>
      ))}
      <button aria-label="FreeCAD" className="ml-px flex h-full w-9 items-center justify-center border-b-2 border-[#76b9ed] bg-[#333]">
        <FreeCadLogo size="size-4" />
      </button>

      <div className="ml-auto flex h-full items-center">
        <span className="h-3.5 w-1 border-x border-[#555]" />
        <dl className="ml-3 grid w-[94px] grid-cols-[auto_1fr] leading-[13px]">
          <dt>U:</dt><dd className="text-right">0,00 kbit/s</dd>
          <dt>D:</dt><dd className="text-right">0,48 kbit/s</dd>
        </dl>
        <button aria-label="Ausgeblendete Symbole" className="ml-2">
          <svg viewBox="0 0 12 8" className="h-2 w-3"><path d="M1 7L6 1L11 7" stroke="#fff" strokeWidth="1.500" fill="none" /></svg>
        </button>
        <span className="ml-[11px]">
          <Icon size="size-4">
            <path d="M33 1L62 17V49L33 65L4 49V17Z" fill="#3ddc6c" />
            <path d="M25 16V50M42 28L27 40L43 50" stroke="#0f3d22" strokeWidth="6" />
          </Icon>
        </span>
        <svg viewBox="0 0 16 14" className="ml-2 h-3.5 w-4" fill="none" stroke="#fff">
          <path d="M5 2.500H15.500V9.500H3.500V6M9 10V13M5 13.500H13M1 .5H5V4.500H1ZM3 4.500V6" />
        </svg>
        <svg viewBox="0 0 15 12" className="ml-2 h-3 w-[15px]" fill="none" stroke="#fff">
          <path d="M1 4H3L6 1V11L3 8H1ZM9 4L13 8M13 4L9 8" />
        </svg>
        <time className="mr-4 ml-3">10:55</time>
        <button aria-label="Benachrichtigungen">
          <svg viewBox="0 0 17 16" className="h-4 w-[17px]">
            <path d="M1 0H16V13H5V16L3 13H1Z" fill="#fff" />
            <path d="M3 3.500H14M3 6.500H14M3 9.500H8" stroke="#101010" />
            <path d="M9 13Q8 9 12 9Q14 6 15 10Q17 13 13 15Z" fill="#fff" stroke="#101010" />
          </svg>
        </button>
        <span className="mr-1 ml-[19px] h-full w-px bg-[#555]" />
      </div>
    </nav>
  );
}

export default function App() {
  return (
    <div className="flex min-h-screen flex-col bg-[#323232] font-['Noto_Sans','Open_Sans',sans-serif] text-[11px] leading-[15px]">
      <Gradients />
      <TitleBar />
      <MenuBar />
      <Toolbars />
      <main className="flex flex-1">
        <SidePanel />
        <div className="ml-1.5 flex min-w-0 flex-1 flex-col">
          <Viewport />
          <DocumentTabs />
        </div>
      </main>
      <StatusBar />
      <Taskbar />
    </div>
  );
}
